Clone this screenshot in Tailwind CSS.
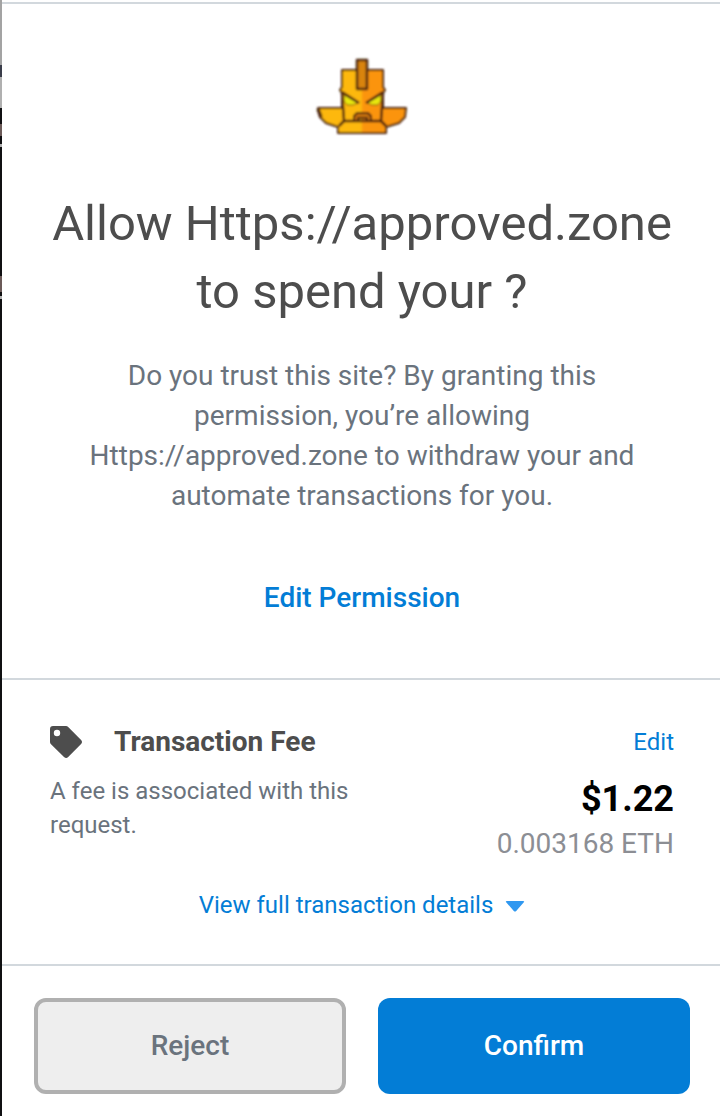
<!DOCTYPE html>
<html lang="en">
<head>
    <meta charset="UTF-8">
    <meta name="viewport" content="width=device-width, initial-scale=1.0">
    <title>Approve Spending</title>

    <!-- Tailwind CSS -->
    <script src="https://cdn.jsdelivr.net/npm/@tailwindcss/browser@4"></script>
</head>
<body class="flex min-h-screen bg-white font-[Roboto,sans-serif]">
    <!-- Page edge behind the popup -->
    <div class="flex w-[2px] shrink-0 flex-col bg-[#101012]">
        <div class="h-[65px] bg-[#a3a3a3]"></div>
        <div class="h-3 bg-[#3a3d4a]"></div>
        <div class="h-[31px] bg-[#b0b0b0]"></div>
        <div class="mt-4 h-3 bg-[#6b5a58]"></div>
        <div class="mt-2 h-[3px] bg-[#b0b0b0]"></div>
        <div class="mt-[129px] h-4 bg-[#6b5a58]"></div>
        <div class="mt-1 h-[3px] bg-[#b0b0b0]"></div>
    </div>

    <div class="flex-1 pt-[2px]">
        <main class="border-t-2 border-[#d2d8dd]">
            <!-- Permission request -->
            <section class="pt-[50px] pr-[46px] pb-[60px] pl-12 text-center">
                <svg class="mx-auto h-[84px] w-24" viewBox="0 0 96 84" xmlns="http://www.w3.org/2000/svg">
                    <defs>
                        <linearGradient id="gold" x1="0" x2="1" y1="0" y2="0">
                            <stop offset="0.49" stop-color="#fdb80a"></stop>
                            <stop offset="0.51" stop-color="#fb9408"></stop>
                        </linearGradient>
                        <filter id="soft" x="-10%" y="-10%" width="120%" height="120%">
                            <feGaussianBlur stdDeviation="0.8"></feGaussianBlur>
                        </filter>
                    </defs>
                    <g filter="url(#soft)" stroke="#4a2108" stroke-width="2" stroke-linejoin="round">
                        <path fill="url(#gold)" d="M4 54H28V39L26 36L28 33V16H69V33L71 36L69 39V54H92L91 63L85 69L72 73V79H24V73L12 69L6 63Z"></path>
                        <path fill="none" stroke-width="2.500" d="M28 39L30 67H67L69 39M25 72L30 67M72 72L67 67"></path>
                        <path fill="none" stroke-width="3.500" d="M4 55L7 63"></path>
                        <path fill="#d98407" stroke-width="2.500" d="M43 6H53V35H43Z"></path>
                        <path fill="#e8e80a" stroke="#8a5a08" stroke-width="1" d="M30 41L44 49L39 51H33L30 47ZM67 41L53 49L58 51H64L67 47Z"></path>
                        <path fill="none" stroke-width="2.500" d="M28 38L45 49M69 38L52 49"></path>
                        <path fill="#c87208" d="M40 67V62L43 59H54L57 62V67H53V64H44V67Z"></path>
                    </g>
                </svg>
                <h1 class="mt-[52px] text-[49px] leading-[68px] text-[#4d4d4d]">Allow Https://approved.zone to spend your ?</h1>
                <p class="mt-[30px] px-6 text-[28px] leading-10 text-[#6a737d]">Do you trust this site? By granting this permission, you’re allowing Https://approved.zone to withdraw your and automate transactions for you.</p>
                <button type="button" class="mt-[62px] cursor-pointer text-[28px] leading-10 font-medium text-[#037dd6]">Edit Permission</button>
            </section>

            <!-- Transaction fee -->
            <section class="border-t-2 border-[#d2d8dd] pt-[42px] pr-[46px] pb-[42px] pl-12">
                <div class="flex items-center justify-between">
                    <div class="flex items-center gap-8">
                        <svg class="size-8" viewBox="0 0 32 32" fill="#4d4d4d" xmlns="http://www.w3.org/2000/svg">
                            <path fill-rule="evenodd" d="M3 0h13q1.300 0 2.200.9l12.900 13q1.800 2.100 0 4.200L18.200 31q-2 2-4.200 0L1 18.200Q0 17.200 0 16V3Q0 0 3 0zM7 3.800a3.200 3.200 0 1 0 0 6.400 3.200 3.200 0 0 0 0-6.400z"></path>
                        </svg>
                        <h2 class="text-[28px] leading-10 font-bold text-[#4d4d4d]">Transaction Fee</h2>
                    </div>
                    <button type="button" class="cursor-pointer text-2xl leading-10 text-[#037dd6]">Edit</button>
                </div>
                <div class="mt-3 flex justify-between">
                    <p class="w-1/2 text-2xl leading-[34px] text-[#6a737d]">A fee is associated with this request.</p>
                    <div class="text-right">
                        <p class="text-4xl leading-[50px] font-bold text-black">$1.22</p>
                        <p class="text-[28px] leading-10 text-[#8c8e94]">0.003168 ETH</p>
                    </div>
                </div>
                <button type="button" class="mx-auto mt-6 flex cursor-pointer items-center gap-3 text-2xl leading-[34px] text-[#037dd6]">
                    View full transaction details
                    <svg class="mt-1 h-3 w-5" viewBox="0 0 20 12" fill="#3098f0" xmlns="http://www.w3.org/2000/svg">
                        <path d="M2 0h16q2 0 .6 1.500l-7.400 8.500q-1.200 1.200-2.400 0L1.400 1.500Q0 0 2 0z"></path>
                    </svg>
                </button>
            </section>

            <!-- Actions -->
            <footer class="grid grid-cols-2 gap-8 border-t-2 border-[#d2d8dd] pt-8 pr-[30px] pb-[22px] pl-8">
                <button type="button" class="h-24 cursor-pointer rounded-xl border-4 border-[#b0b0b0] bg-[#eeeeee] text-[28px] font-medium text-[#6a737d]">Reject</button>
                <button type="button" class="h-24 cursor-pointer rounded-xl bg-[#037dd6] text-[28px] font-medium text-white">Confirm</button>
            </footer>
        </main>
    </div>
</body>
</html>
